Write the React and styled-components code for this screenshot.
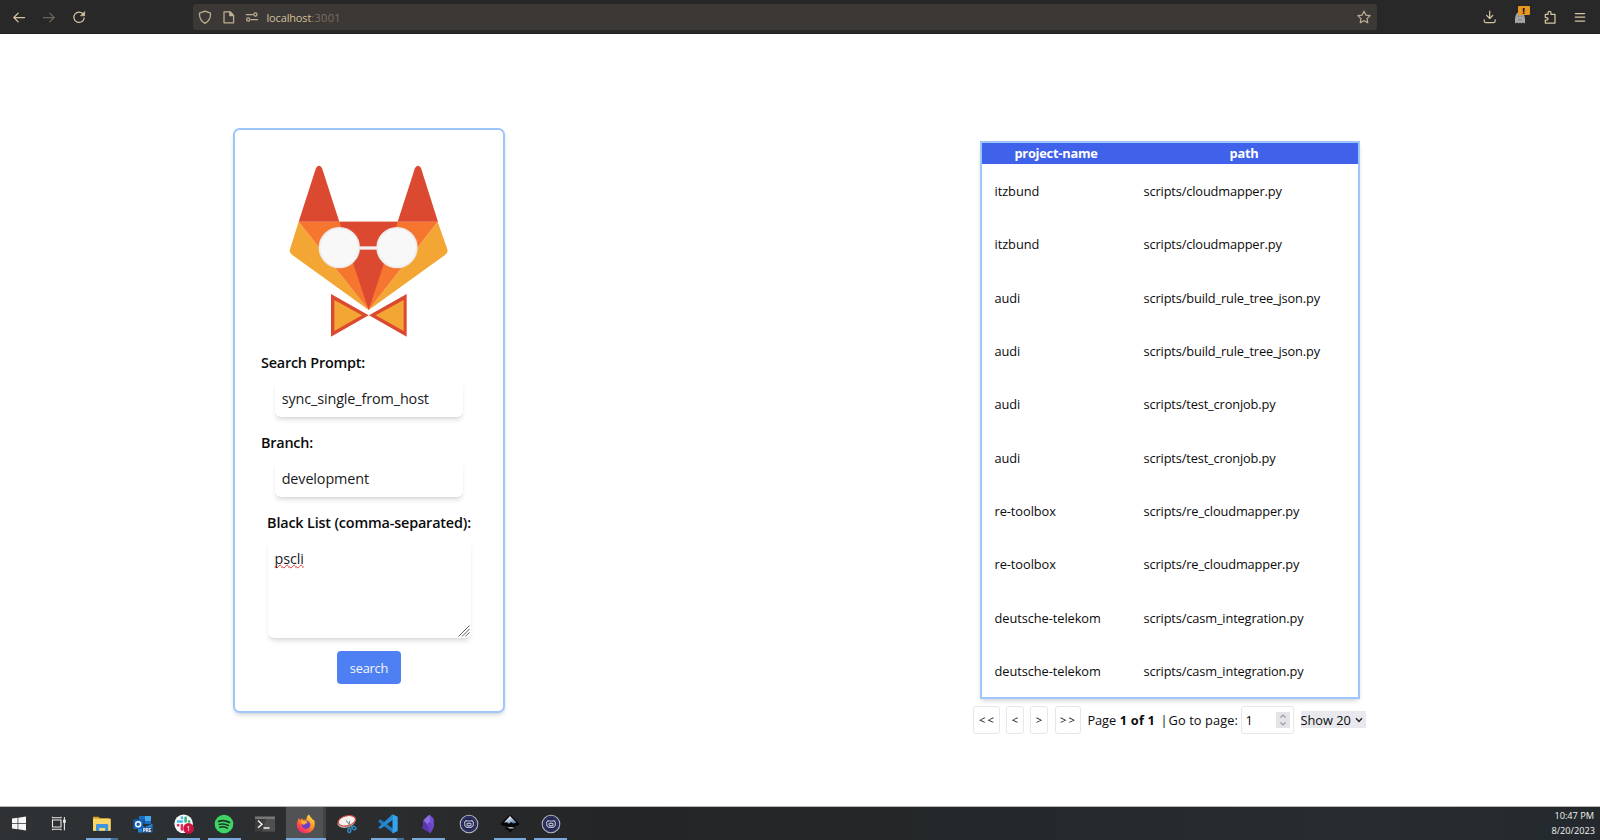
import React from "react";
import styled, { createGlobalStyle, css } from "styled-components";

const GlobalStyle = createGlobalStyle`
  * { box-sizing: border-box; }
  body {
    margin: 0;
    background: #fff;
    color: #0b0b0c;
    font-family: "Open Sans", "Noto Sans", sans-serif;
    overflow: hidden;
  }
  input, button { font-family: inherit; color: inherit; }
`;

const Screen = styled.div`
  display: flex;
  flex-direction: column;
  width: 1600px;
  height: 840px;
`;

/* ---------- browser bar ---------- */

const BrowserBar = styled.header`
  display: flex;
  align-items: center;
  height: 34px;
  padding: 0 13px 0 12px;
  background: #282828;
  border-bottom: 1px solid #1f1f1f;
  color: #d5c4a1;
`;

const IconGroup = styled.div`
  display: flex;
  align-items: center;
  gap: ${(p) => p.$gap}px;
`;

const LineIcon = styled.svg`
  display: block;
  width: 14px;
  height: 14px;
  fill: none;
  stroke: currentColor;
  stroke-width: 1.25;
  stroke-linecap: round;
  stroke-linejoin: round;
  opacity: ${(p) => (p.$dim ? 0.4 : 1)};
`;

const AddressField = styled.div`
  display: flex;
  align-items: center;
  width: 1184px;
  height: 26px;
  margin: 0 106px 0 106.5px;
  padding: 0 6px 0 5.5px;
  border-radius: 3px;
  background: #3c3836;
  color: #bdae93;
`;

const Address = styled.span`
  flex: 1;
  margin-left: 7.5px;
  padding-top: 2px;
  font-size: 11px;
  line-height: 16px;
  letter-spacing: -0.16px;
  color: #d0c09b;
`;

const Port = styled.span`
  color: #7c6f64;
  letter-spacing: 0.35px;
`;

const GhostWrap = styled.span`
  position: relative;
  display: block;
  width: 14px;
  height: 14px;
`;

const GhostIcon = styled.svg`
  display: block;
  width: 14px;
  height: 16px;
`;

const AlertBadge = styled.span`
  position: absolute;
  left: 5px;
  top: -4px;
  width: 12px;
  height: 9px;
  border-radius: 1px;
  background: #e8961f;
  color: #1d1d1d;
  font-size: 9px;
  font-weight: 800;
  line-height: 9px;
  text-align: center;
`;

/* ---------- page ---------- */

const Page = styled.main`
  display: grid;
  grid-template-columns: 738px 864px;
  align-items: start;
  justify-items: center;
  height: 772px;
`;

const SearchCard = styled.form`
  display: flex;
  flex-direction: column;
  align-items: center;
  width: 272px;
  height: 585px;
  margin-top: 94px;
  padding: 33.5px 26px 0;
  border: 2px solid #9dc6fc;
  border-radius: 6.5px;
  box-shadow: 0 3px 5px -1px rgba(0, 0, 0, 0.13), 0 2px 4px -2px rgba(0, 0, 0, 0.1);
`;

const FoxLogo = styled.svg`
  display: block;
  width: 161.67px;
  height: 174px;
  margin-bottom: 13.5px;
`;

const Label = styled.label`
  align-self: ${(p) => (p.$centered ? "center" : "flex-start")};
  font-size: 14.4px;
  font-weight: 600;
  line-height: 24px;
  letter-spacing: ${(p) => (p.$centered ? -0.17 : -0.21)}px;
  white-space: nowrap;
`;

const fieldBox = css`
  border: 0;
  border-radius: 6px;
  background: #fff;
  box-shadow: 0 3.5px 5px -1px rgba(0, 0, 0, 0.12), 0 1.5px 3px -2px rgba(0, 0, 0, 0.1);
  font-size: 14.4px;
  letter-spacing: -0.12px;
  color: #1a1a1c;
  outline: none;
`;

const TextInput = styled.input`
  ${fieldBox}
  width: 188px;
  height: 37px;
  margin: 5px 0 14px;
  padding: 0 6.7px 1px;
`;

const BlackListBox = styled.div`
  ${fieldBox}
  position: relative;
  width: 203px;
  height: 97.5px;
  margin: 5px 0 13px;
  padding: 8px 7px;
  line-height: 22px;
`;

const Misspelled = styled.span`
  text-decoration: underline wavy #e5322d 1px;
  text-decoration-skip-ink: none;
  text-underline-offset: 0;
`;

const ResizeGrip = styled.svg`
  position: absolute;
  right: 1px;
  bottom: 1px;
  width: 12px;
  height: 12px;
  stroke: #5d5d5d;
  stroke-width: 1;
`;

const SearchButton = styled.button`
  width: 64px;
  height: 33px;
  padding: 0;
  border: 0;
  border-radius: 4px;
  background: #4f80f3;
  color: #f4f7ff;
  font-size: 12.8px;
  line-height: 34px;
  letter-spacing: -0.2px;
`;

const Results = styled.section`
  display: flex;
  flex-direction: column;
  align-items: center;
  margin-top: 107px;
`;

const Table = styled.table`
  width: 380px;
  border: 2px solid #9dc6fc;
  border-collapse: separate;
  border-spacing: 0;
  table-layout: fixed;
  box-shadow: 0 3px 5px -1px rgba(0, 0, 0, 0.13), 0 2px 4px -2px rgba(0, 0, 0, 0.1);
  font-size: 12.8px;
`;

const HeadCell = styled.th`
  width: ${(p) => p.$width}px;
  height: 21px;
  padding: 0;
  background: #4061e9;
  color: #fff;
  font-weight: 700;
  line-height: 21px;
  letter-spacing: -0.22px;
`;

const Cell = styled.td`
  height: 53.33px;
  padding: 0.6px 0 0 ${(p) => p.$indent}px;
  line-height: 20px;
  letter-spacing: ${(p) => p.$tracking}px;
  white-space: nowrap;
`;

const Pager = styled.nav`
  display: flex;
  align-items: center;
  width: 394px;
  height: 28px;
  margin-top: 6.7px;
  font-size: 12.8px;
  line-height: 20px;
  letter-spacing: -0.1px;
  white-space: pre;
`;

const PagerButton = styled.button`
  flex: none;
  width: ${(p) => p.$width}px;
  height: 28px;
  margin-right: ${(p) => p.$after}px;
  padding: 0;
  border: 1px solid #e5e7eb;
  border-radius: 3px;
  background: #fff;
  font-size: 11.2px;
  letter-spacing: ${(p) => (p.$double ? 2.2 : 0)}px;
  text-indent: ${(p) => (p.$double ? 2.2 : 0)}px;
`;

const PageCount = styled.span`
  width: 73px;

  b {
    margin-left: 0.5px;
    letter-spacing: 0.2px;
  }
`;

const Divider = styled.span`
  width: 8px;
`;

const GoTo = styled.span`
  width: 72px;
  letter-spacing: 0.1px;
`;

const PageNumber = styled.div`
  display: flex;
  align-items: center;
  justify-content: space-between;
  width: 53.5px;
  height: 28px;
  margin-right: 6.5px;
  padding: 0 3px 0 4px;
  border: 1px solid #e5e7eb;
  border-radius: 3px;
`;

const Spinner = styled.svg`
  width: 14px;
  height: 16px;
  background: #e4e4e8;
  fill: none;
  stroke: #9a9aa2;
  stroke-width: 1.2;
`;

const PageSize = styled.div`
  display: flex;
  align-items: center;
  justify-content: space-between;
  width: 65.5px;
  height: 17px;
  padding-right: 3px;
  background: #e9e9ed;
  letter-spacing: 0;
`;

const Chevron = styled.svg`
  width: 8px;
  height: 6px;
  fill: none;
  stroke: #222;
  stroke-width: 1.4;
`;

/* ---------- taskbar ---------- */

const Taskbar = styled.footer`
  display: flex;
  height: 34px;
  border-top: 1px solid #b4b6b7;
  background: linear-gradient(90deg, #2e3234 0%, #2a2c2e 25%, #232526 38%, #25282a 60%, #272c2f 85%, #23292c 100%);
`;

const TaskSlot = styled.div`
  position: relative;
  display: flex;
  align-items: center;
  justify-content: center;
  flex: none;
  width: ${(p) => p.$width || 40.8}px;
  background: ${(p) =>
    p.$active ? "linear-gradient(90deg, #505253 0 37.5px, #414344 37.5px)" : "none"};

  &::after {
    content: "";
    position: absolute;
    bottom: 0;
    left: ${(p) => (p.$active ? 0 : 4)}px;
    right: ${(p) => (p.$active ? 0.5 : 4)}px;
    height: 2px;
    background: ${(p) =>
      p.$stacked ? "linear-gradient(90deg, #78aade 0 79%, #4a6f99 79%)" : p.$open ? "#78aade" : "transparent"};
  }
`;

const AppIcon = styled.svg`
  display: block;
  width: 20px;
  height: 20px;
`;

const Clock = styled.div`
  display: flex;
  flex-direction: column;
  align-items: flex-end;
  margin-left: auto;
  padding: 1px 5px 0 0;
  color: #f2f2f2;
  font-size: 9.2px;
  line-height: 15px;

  span:first-child {
    margin-right: 1px;
  }
`;

const rows = [
  ["itzbund", "scripts/cloudmapper.py"],
  ["itzbund", "scripts/cloudmapper.py"],
  ["audi", "scripts/build_rule_tree_json.py"],
  ["audi", "scripts/build_rule_tree_json.py"],
  ["audi", "scripts/test_cronjob.py"],
  ["audi", "scripts/test_cronjob.py"],
  ["re-toolbox", "scripts/re_cloudmapper.py"],
  ["re-toolbox", "scripts/re_cloudmapper.py"],
  ["deutsche-telekom", "scripts/casm_integration.py"],
  ["deutsche-telekom", "scripts/casm_integration.py"],
];

function Fox() {
  return (
    <FoxLogo viewBox="190 130 485 522">
      <path fill="#f4a634" d="M222 303 196 386Q193 397 203 403L432 568 661 403Q671 397 668 386L639 303 432 568Z" />
      <path fill="#f6752f" d="M222 303H639L432 568Z" />
      <path fill="#db4a30" d="M344 303H519L432 568Z" />
      <path fill="#db4a30" d="M222 303 274 142Q283 129 292 142L344 303Z" />
      <path fill="#db4a30" d="M519 303 571 142Q580 129 589 142L640 303Z" />
      <path stroke="#f1eeee" strokeWidth="10" d="M404 382H458" />
      <circle cx="344" cy="381" r="59.5" fill="#f8f8f8" stroke="#eeecec" strokeWidth="5" />
      <circle cx="517" cy="381" r="59.5" fill="#f8f8f8" stroke="#eeecec" strokeWidth="5" />
      <path fill="#db4a30" d="M319 520 432 584 319 648ZM546 520 433 584 546 648Z" />
      <path fill="#f4a634" d="M329 538 412 584 329 631ZM537 538 453 584 537 631Z" />
    </FoxLogo>
  );
}

function BrowserChrome() {
  return (
    <BrowserBar>
      <IconGroup $gap={16}>
        <LineIcon viewBox="0 0 14 14"><path d="M12.6 7.5H1.8M6.2 3.1 1.8 7.5l4.4 4.4" /></LineIcon>
        <LineIcon viewBox="0 0 14 14" $dim><path d="M1.4 7.5h10.8M7.8 3.1 12.2 7.5l-4.4 4.4" /></LineIcon>
        <LineIcon viewBox="0 0 14 14">
          <path d="M11.4 4.4A5.2 5.2 0 1 0 12.2 8" />
          <path d="M12.7 1.8v4H8.7Z" fill="currentColor" strokeWidth="0.6" />
        </LineIcon>
      </IconGroup>
      <AddressField>
        <IconGroup $gap={9.5}>
          <LineIcon viewBox="0 0 14 14"><path d="M7 1.1 12.5 3.2c.2 4.6-1.4 8-5.5 10.2C2.9 11.2 1.3 7.8 1.5 3.2Z" /></LineIcon>
          <LineIcon viewBox="0 0 14 14">
            <path d="M2 1.8h6l3.6 3.6v7.4H2Z" />
            <path d="M7.8 1.8v3.8h3.8Z" fill="currentColor" />
          </LineIcon>
          <LineIcon viewBox="0 0 14 14">
            <path d="M1.2 4.5h6.4M6 9.5h6.6" />
            <circle cx="10.4" cy="4.5" r="1.6" />
            <circle cx="3.2" cy="9.5" r="1.6" />
          </LineIcon>
        </IconGroup>
        <Address>localhost<Port>:3001</Port></Address>
        <LineIcon viewBox="0 0 14 14">
          <path d="m7 1.2 1.85 3.85 4.25.6-3.1 2.95.75 4.2L7 10.8 3.25 12.8 4 8.6.9 5.65l4.25-.6Z" />
        </LineIcon>
      </AddressField>
      <IconGroup $gap={16}>
        <LineIcon viewBox="0 0 14 14"><path d="M6.7 1v7.5M3.6 5.4 6.7 8.5l3.1-3.1M1.2 9.8v1.2q0 1.5 1.5 1.5h8q1.5 0 1.5-1.5V9.8" /></LineIcon>
        <GhostWrap>
          <GhostIcon viewBox="0 0 14 16">
            <path fill="#a6a6a6" d="M2 13.5V9C2.5 4.5 4 2 7 2S11.5 4.5 12 9v4.5l-2-1-1.5 1-1.5-1-1.5 1-1.5-1Z" />
            <path fill="#7a7a7a" d="M5 5.5h1.2V7H5ZM8 5.5h1.2V7H8ZM5.2 9.2h3.6v1H5.2Z" />
          </GhostIcon>
          <AlertBadge>!</AlertBadge>
        </GhostWrap>
        <LineIcon viewBox="0 0 14 14">
          <path d="M2.3 4.4H5V2.9a1.5 1.5 0 0 1 3 0V4.4h4V13H2.3V10.2h1.4a1.35 1.35 0 0 0 0-2.7H2.3Z" />
        </LineIcon>
        <LineIcon viewBox="0 0 14 14"><path d="M2.3 3.5h9.4M2.3 7.2h9.4M2.3 11h9.4" /></LineIcon>
      </IconGroup>
    </BrowserBar>
  );
}

function Emblem() {
  return (
    <AppIcon viewBox="0 0 20 20">
      <circle cx="10" cy="10" r="8.8" fill="#23264f" stroke="#b0b2bc" strokeWidth="1.1" />
      <circle cx="10" cy="10" r="7" fill="none" stroke="#383c74" strokeWidth="1" />
      <path fill="none" stroke="#b9bbd0" strokeWidth="1.1" strokeLinejoin="round" d="M5.6 8.4 7 6.6 8.6 7h2.8L13 6.600 14.400 8.400 14.200 11.600 12.200 13.400H7.800L5.800 11.600ZM8 11.200V9.800q2-1.300 4 0v1.400q-2 1-4 0" />
    </AppIcon>
  );
}

function TaskbarApps() {
  return (
    <>
      <TaskSlot $width={38}>
        <AppIcon viewBox="0 0 20 20">
          <path fill="#f5f5f5" d="M3 4.6 8.6 3.8V9.1H3ZM9.300 3.7 17 2.6V9.1H9.3ZM3 9.8H8.6V15.2L3 14.4ZM9.3 9.8H17V16.4L9.3 15.3Z" />
        </AppIcon>
      </TaskSlot>
      <TaskSlot $width={43.6}>
        <AppIcon viewBox="0 0 20 20" fill="none" stroke="#e8e8e8" strokeWidth="1.1">
          <path d="M2.500 6h8.500v7H2.500ZM2.500 2.800V3.800H11V2.800M2.500 16.200V15.200H11V16.200M14.400 2.900V16.200" />
          <path fill="#e8e8e8" d="M13.600 6.300h1.600v2h-1.600Z" />
        </AppIcon>
      </TaskSlot>
      <TaskSlot $open $stacked>
        <AppIcon viewBox="0 0 20 20">
          <path fill="#dca023" d="M1 2.7h5.500l1.500 1.600H17V8H1Z" />
          <path fill="#fad568" d="M1 4.7H18.800V16.900H1Z" />
          <path fill="#4094dd" d="M4 16.900V10.900q0-1 1-1h10.200q1 0 1 1v6H13V14.100H7.300v2.800Z" />
        </AppIcon>
      </TaskSlot>
      <TaskSlot>
        <AppIcon viewBox="0 0 20 20">
          <path fill="#1b6ec2" d="M6 2h12v8H6Z" />
          <path fill="#43a9ea" d="M12 2h6v5h-6Z" />
          <path fill="#165298" d="M6 5.500h6V10H6Z" />
          <path fill="#2384d6" d="M5 9.500 12 13l7.500-3.500V18.500H5Z" />
          <path fill="#1264b8" d="M.500 5.500h9.500v9.500H.500Z" />
          <circle cx="5.2" cy="10.3" r="2.5" fill="none" stroke="#fff" strokeWidth="1.4" />
          <path fill="#17498c" d="M9 13.500h10.500v5H9Z" />
          <text x="9.7" y="17.9" fill="#fff" fontFamily="Open Sans" fontSize="4.6" fontWeight="700">PRE</text>
        </AppIcon>
      </TaskSlot>
      <TaskSlot $open>
        <AppIcon viewBox="0 0 20 20">
          <circle cx="9.6" cy="9.8" r="9.3" fill="#f7f7f7" />
          <g fill="none" strokeWidth="2.5" strokeLinecap="round">
            <path stroke="#36bfe8" d="M8 3.500V4M4 7.600H8" />
            <path stroke="#2fb67c" d="M11.600 3.800V7.600M15 7.600H15.200" />
            <path stroke="#e02a5b" d="M4 11.300H4.300M7.900 11.300V15.500" />
            <path stroke="#ecb22e" d="M11.600 11.300h4M11.600 15V15.200" />
          </g>
          <circle cx="14.6" cy="14.4" r="5.3" fill="#cc1440" />
          <text x="14.5" y="17.2" fill="#fff" textAnchor="middle" fontFamily="Open Sans" fontSize="7.5">1</text>
        </AppIcon>
      </TaskSlot>
      <TaskSlot $open>
        <AppIcon viewBox="0 0 20 20">
          <circle cx="10" cy="10" r="9.3" fill="#3fd564" />
          <path fill="none" stroke="#1e3526" strokeLinecap="round" strokeWidth="1.8" d="M4.600 7.300q5.600-1.600 10.800 1.100" />
          <path fill="none" stroke="#1e3526" strokeLinecap="round" strokeWidth="1.5" d="M5.200 10.400q4.900-1.300 9.200 1.100M5.800 13.200q4-1 7.500 1" />
        </AppIcon>
      </TaskSlot>
      <TaskSlot>
        <AppIcon viewBox="0 0 20 20">
          <path fill="#3c3c3c" d="M0 2.500h20v15H0Z" />
          <path fill="#777" d="M0 2.500h20V5H0Z" />
          <path fill="#505050" d="M11 5h9v12.500H7Z" />
          <path fill="none" stroke="#f4f4f4" strokeWidth="1.4" d="M3 6.500 7 10.200 3 13.800M8.500 14H14.500" />
        </AppIcon>
      </TaskSlot>
      <TaskSlot $open $active>
        <AppIcon viewBox="0 0 20 20">
          <defs>
            <linearGradient id="flame" x1="0.9" y1="0" x2="0.2" y2="1">
              <stop offset="0" stopColor="#ffe84a" />
              <stop offset="0.45" stopColor="#ff9526" />
              <stop offset="0.8" stopColor="#fb3d55" />
              <stop offset="1" stopColor="#e22484" />
            </linearGradient>
          </defs>
          <path fill="url(#flame)" d="M2.600 4 4.300 6 6 4.200 7 6 10.500 5.500C10.500 3 11.500 1.200 13.200.5 13.500 3 16 3.500 17 6l1.200.300C19.500 10 19 19 10 19.300 3 19.300.500 14 .800 10 1 7.500 2 6.500 2.600 4Z" />
          <circle cx="10" cy="10.8" r="4.3" fill="#7040c8" />
          <path fill="#ffad2c" d="M4.500 8q3-2 6.500-.5l.5 1.500q-3 .3-3.500 2Q5.500 10.500 4.500 8Z" />
        </AppIcon>
      </TaskSlot>
      <TaskSlot>
        <AppIcon viewBox="0 0 20 20">
          <ellipse cx="9.5" cy="8" rx="9.2" ry="5.5" fill="#b9b9b9" transform="rotate(-16 9.500 8)" />
          <ellipse cx="9.9" cy="6.8" rx="8.8" ry="5" fill="#f5f3f2" stroke="#d6453d" strokeWidth="1.1" transform="rotate(-14 9.900 6.800)" />
          <path fill="none" stroke="#888" strokeWidth="1.1" d="m9 6.500 6 7M12.500 7 12.300 13.500" />
          <ellipse cx="12.3" cy="16.3" rx="1.5" ry="2.2" fill="none" stroke="#2e90cf" strokeWidth="1.4" />
          <ellipse cx="17" cy="14" rx="2" ry="1.5" fill="none" stroke="#2e90cf" strokeWidth="1.4" transform="rotate(35 17 14)" />
        </AppIcon>
      </TaskSlot>
      <TaskSlot $open $stacked>
        <AppIcon viewBox="0 0 20 20">
          <path fill="#1f78bd" d="M.500 6.600 2.300 5.200 15 14.500V19L.500 7.900Z" />
          <path fill="#2689d1" d="M.500 13.200 14.500.300 15 5.800 2.300 14.900.500 13.500Z" />
          <path fill="#36a3ee" d="M14.500.300 19.700 2.700V17L14.500 19.600Z" />
        </AppIcon>
      </TaskSlot>
      <TaskSlot $open>
        <AppIcon viewBox="0 0 20 20">
          <path fill="#7652d2" d="M11.500.800 15.600 4.500 16 12.500 12.500 19 4.600 14.500 5.500 6Z" />
          <path fill="#5b37ad" d="M5.500 6 9 10 12.500 19 4.600 14.500Z" />
          <path fill="#8d6fe2" d="M11.500.800 12 8 9 10 5.500 6Z" />
          <path fill="#6b45c6" d="M12 8 16 12.500 12.500 19 9 10Z" />
        </AppIcon>
      </TaskSlot>
      <TaskSlot><Emblem /></TaskSlot>
      <TaskSlot $open>
        <AppIcon viewBox="0 0 20 20">
          <defs>
            <linearGradient id="peak" x1="0" y1="0" x2="0.8" y2="1">
              <stop offset="0.2" stopColor="#ffffff" />
              <stop offset="1" stopColor="#4f74b0" />
            </linearGradient>
          </defs>
          <path fill="#070707" d="M10 1.200Q11 1.200 12 2.200L19 9.300Q20 11 17.500 11.500L13.500 12.500 16 14.500 12.500 15.500 10.500 18.800 8 16 4.500 14.800 7 13 2.500 11.500Q0 11 1 9.300L8 2.200Q9 1.200 10 1.200Z" />
          <path fill="url(#peak)" d="M10 2 16.500 8.600 13.500 9.600 11 8 9 9.800 7 8.300 4 8.500Z" />
          <path fill="#aeb4bc" d="M7 13.300 12 12.900 15 14.200 10 14.700Z" />
        </AppIcon>
      </TaskSlot>
      <TaskSlot $open><Emblem /></TaskSlot>
    </>
  );
}

export default function App() {
  return (
    <Screen>
      <GlobalStyle />
      <BrowserChrome />
      <Page>
        <SearchCard>
          <Fox />
          <Label>Search Prompt:</Label>
          <TextInput defaultValue="sync_single_from_host" spellCheck={false} />
          <Label>Branch:</Label>
          <TextInput defaultValue="development" spellCheck={false} />
          <Label $centered>Black List (comma-separated):</Label>
          <BlackListBox>
            <Misspelled>pscli</Misspelled>
            <ResizeGrip viewBox="0 0 12 12">
              <path d="M.500 11.500 11.500.500M4 11.500 11.500 4M7.300 11.500 11.500 7.300" />
            </ResizeGrip>
          </BlackListBox>
          <SearchButton type="button">search</SearchButton>
        </SearchCard>
        <Results>
          <Table>
            <thead>
              <tr>
                <HeadCell $width={148}>project-name</HeadCell>
                <HeadCell $width={228}>path</HeadCell>
              </tr>
            </thead>
            <tbody>
              {rows.map(([project, path], i) => (
                <tr key={i}>
                  <Cell $indent={12.5} $tracking={-0.06}>{project}</Cell>
                  <Cell $indent={13.5} $tracking={-0.14}>{path}</Cell>
                </tr>
              ))}
            </tbody>
          </Table>
          <Pager>
            <PagerButton $width={27} $after={6} $double>&lt;&lt;</PagerButton>
            <PagerButton $width={18} $after={6}>&lt;</PagerButton>
            <PagerButton $width={18} $after={6.5}>&gt;</PagerButton>
            <PagerButton $width={26} $after={7} $double>&gt;&gt;</PagerButton>
            <PageCount>Page <b>1 of 1</b></PageCount>
            <Divider>|</Divider>
            <GoTo>Go to page:</GoTo>
            <PageNumber>
              1
              <Spinner viewBox="0 0 14 16"><path d="M4.500 5.500 7 3l2.500 2.500M4.500 10.500 7 13l2.500-2.500" /></Spinner>
            </PageNumber>
            <PageSize>
              Show 20
              <Chevron viewBox="0 0 8 6"><path d="M1 1.200 4 4.400 7 1.200" /></Chevron>
            </PageSize>
          </Pager>
        </Results>
      </Page>
      <Taskbar>
        <TaskbarApps />
        <Clock>
          <span>10:47 PM</span>
          <span>8/20/2023</span>
        </Clock>
      </Taskbar>
    </Screen>
  );
}
